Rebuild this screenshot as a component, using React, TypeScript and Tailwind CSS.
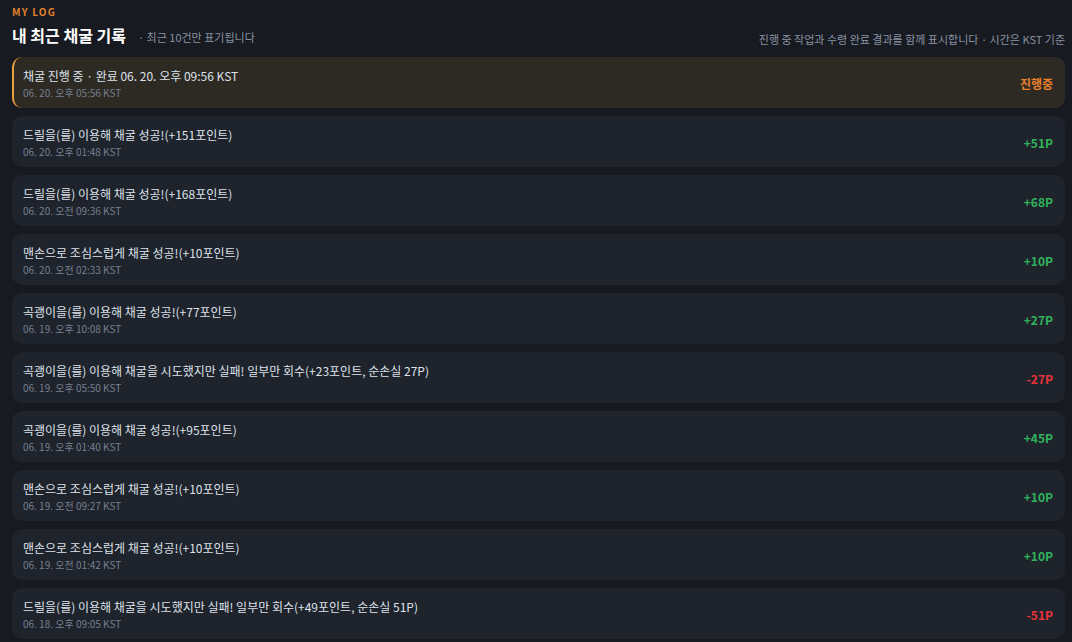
import React from "react";

type Log = {
  title: string;
  time: string;
  amount: string;
  kind: "pending" | "plus" | "minus";
};

const logs: Log[] = [
  { title: "채굴 진행 중 · 완료 06. 20. 오후 09:56 KST", time: "06. 20. 오후 05:56 KST", amount: "진행중", kind: "pending" },
  { title: "드릴을(를) 이용해 채굴 성공!(+151포인트)", time: "06. 20. 오후 01:48 KST", amount: "+51P", kind: "plus" },
  { title: "드릴을(를) 이용해 채굴 성공!(+168포인트)", time: "06. 20. 오전 09:36 KST", amount: "+68P", kind: "plus" },
  { title: "맨손으로 조심스럽게 채굴 성공!(+10포인트)", time: "06. 20. 오전 02:33 KST", amount: "+10P", kind: "plus" },
  { title: "곡괭이을(를) 이용해 채굴 성공!(+77포인트)", time: "06. 19. 오후 10:08 KST", amount: "+27P", kind: "plus" },
  { title: "곡괭이을(를) 이용해 채굴을 시도했지만 실패! 일부만 회수(+23포인트, 순손실 27P)", time: "06. 19. 오후 05:50 KST", amount: "-27P", kind: "minus" },
  { title: "곡괭이을(를) 이용해 채굴 성공!(+95포인트)", time: "06. 19. 오후 01:40 KST", amount: "+45P", kind: "plus" },
  { title: "맨손으로 조심스럽게 채굴 성공!(+10포인트)", time: "06. 19. 오전 09:27 KST", amount: "+10P", kind: "plus" },
  { title: "맨손으로 조심스럽게 채굴 성공!(+10포인트)", time: "06. 19. 오전 01:42 KST", amount: "+10P", kind: "plus" },
  { title: "드릴을(를) 이용해 채굴을 시도했지만 실패! 일부만 회수(+49포인트, 순손실 51P)", time: "06. 18. 오후 09:05 KST", amount: "-51P", kind: "minus" },
];

export default function App() {
  return (
    <div
      className="min-h-screen bg-[#171a21] pl-3 pr-[7px] pt-[6px] pb-4"
      style={{ fontFamily: '"Noto Sans CJK KR", "Noto Sans", sans-serif' }}
    >
      <div className="text-[10px] font-bold tracking-[0.12em] text-[#e0822e] leading-[12px]">
        MY LOG
      </div>
      <div className="mt-[6px] flex items-end justify-between">
        <div className="flex items-end gap-[12px]">
          <h1 className="text-[16px] font-bold text-white leading-[22px]">내 최근 채굴 기록</h1>
          <span className="text-[11px] text-[#8a93a3] leading-[18px]">· 최근 10건만 표기됩니다</span>
        </div>
        <span className="text-[11px] text-[#8a93a3] leading-[14px]">
          진행 중 작업과 수령 완료 결과를 함께 표시합니다 · 시간은 KST 기준
        </span>
      </div>
      <div className="mt-[11px] flex flex-col gap-2">
        {logs.map((log, i) => (
          <div
            key={i}
            className={
              log.kind === "pending"
                ? "flex h-[51px] items-center justify-between rounded-[10px] border-l-2 border-[#e9a03a] bg-[#2d2923] pl-[9px] pr-3"
                : "flex h-[51px] items-center justify-between rounded-[10px] bg-[#1f232c] pl-[11px] pr-3"
            }
          >
            <div className="mt-[2px] flex flex-col">
              <span className="text-[12px] text-[#dde2ea] leading-[18px]">{log.title}</span>
              <span className="mt-[1px] text-[10px] text-[#76808f] leading-[14px]">{log.time}</span>
            </div>
            <span
              className={
                log.kind === "pending"
                  ? "mt-[3px] text-[12px] font-bold text-[#ea812c]"
                  : log.kind === "plus"
                  ? "mt-[3px] text-[12px] font-bold text-[#2fb35c]"
                  : "mt-[3px] text-[12px] font-bold text-[#e8333c]"
              }
            >
              {log.amount}
            </span>
          </div>
        ))}
      </div>
    </div>
  );
}
